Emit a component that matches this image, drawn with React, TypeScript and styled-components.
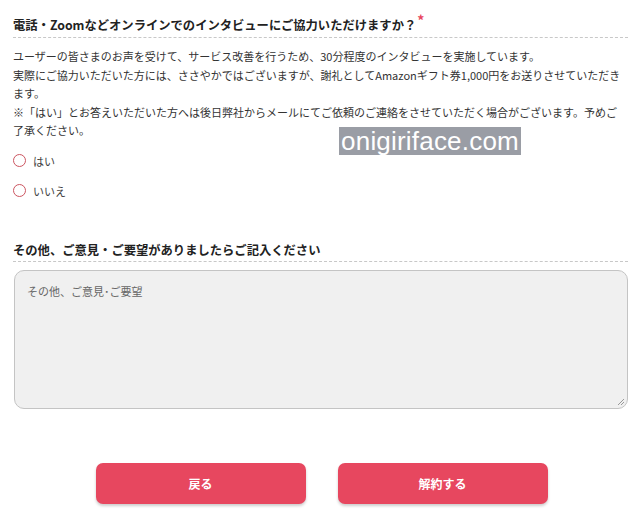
import React from "react";
import styled, { createGlobalStyle } from "styled-components";

const Global = createGlobalStyle`
  html, body { margin: 0; padding: 0; background: #fff; }
  body { font-family: "Noto Sans CJK JP", "Noto Sans", sans-serif; color: #333; }
`;

const Page = styled.div`
  position: relative;
  width: 640px;
  height: 531px;
  padding: 14px 12px 0 13px;
  box-sizing: border-box;
  overflow: hidden;
`;

const Heading = styled.div`
  font-size: 12.3px;
  font-weight: 700;
  line-height: 20px;
  color: #222;
  padding-bottom: 2px;
  border-bottom: 1px dashed #c8c8c8;
`;

const Required = styled.span`
  color: #e8475f;
  font-size: 14px;
  position: relative;
  top: -4px;
  margin-left: 1px;
`;

const Body = styled.p`
  margin: 9px 6px 0 0;
  font-size: 11px;
  line-height: 18.6px;
  color: #333;
`;

const Options = styled.div`
  display: flex;
  flex-direction: column;
  margin-top: 6px;
`;

const Option = styled.label`
  display: flex;
  align-items: center;
  gap: 7px;
  height: 30px;
  font-size: 11px;
  color: #444;
`;

const Circle = styled.span`
  width: 11px;
  height: 11px;
  border: 1.6px solid #cc5560;
  border-radius: 50%;
  box-sizing: content-box;
`;

const Section = styled.div`
  margin-top: 34px;
`;

const Heading2 = styled(Heading)`
  padding-bottom: 1px;
`;

const TextArea = styled.div`
  margin-top: 8px;
  margin-left: 1px;
  height: 139px;
  box-sizing: border-box;
  background: #f0f0f0;
  border: 1px solid #c4c4c4;
  border-radius: 10px;
  padding: 12px 12px;
  font-size: 11px;
  color: #666;
  position: relative;
`;

const Grip = styled.svg`
  position: absolute;
  right: 2px;
  bottom: 2px;
`;

const Buttons = styled.div`
  display: flex;
  justify-content: center;
  gap: 32px;
  margin-top: 54px;
  padding-left: 2px;
`;

const Button = styled.button`
  width: 210px;
  height: 41px;
  border: none;
  border-radius: 7px;
  background: #e7475f;
  color: #fff;
  font-family: "Noto Sans CJK JP", sans-serif;
  font-size: 12px;
  font-weight: 700;
  box-shadow: 0 2px 3px rgba(0, 0, 0, 0.2);
`;

const Watermark = styled.div`
  position: absolute;
  left: 339px;
  top: 127px;
  width: 182px;
  height: 28px;
  background: #9a9da5;
  color: #fff;
  font-family: "Liberation Sans", Arial, sans-serif;
  font-size: 26px;
  line-height: 28px;
  text-align: center;
  letter-spacing: 0.2px;
`;

export default function App() {
  return (
    <Page>
      <Global />
      <Heading>
        電話・Zoomなどオンラインでのインタビューにご協力いただけますか？<Required>*</Required>
      </Heading>
      <Body>
        ユーザーの皆さまのお声を受けて、サービス改善を行うため、30分程度のインタビューを実施しています。
        <br />
        実際にご協力いただいた方には、ささやかではございますが、謝礼としてAmazonギフト券1,000円をお送りさせていただきます。
        <br />
        ※「はい」とお答えいただいた方へは後日弊社からメールにてご依頼のご連絡をさせていただく場合がございます。予めご了承ください。
      </Body>
      <Options>
        <Option>
          <Circle />
          はい
        </Option>
        <Option>
          <Circle />
          いいえ
        </Option>
      </Options>
      <Section>
        <Heading2>その他、ご意見・ご要望がありましたらご記入ください</Heading2>
        <TextArea>
          その他、ご意見･ご要望
          <Grip width="8" height="8" viewBox="0 0 8 8">
            <path d="M7 1 L1 7 M7 4 L4 7" stroke="#999" strokeWidth="1" />
          </Grip>
        </TextArea>
      </Section>
      <Buttons>
        <Button>戻る</Button>
        <Button>解約する</Button>
      </Buttons>
      <Watermark>onigiriface.com</Watermark>
    </Page>
  );
}
